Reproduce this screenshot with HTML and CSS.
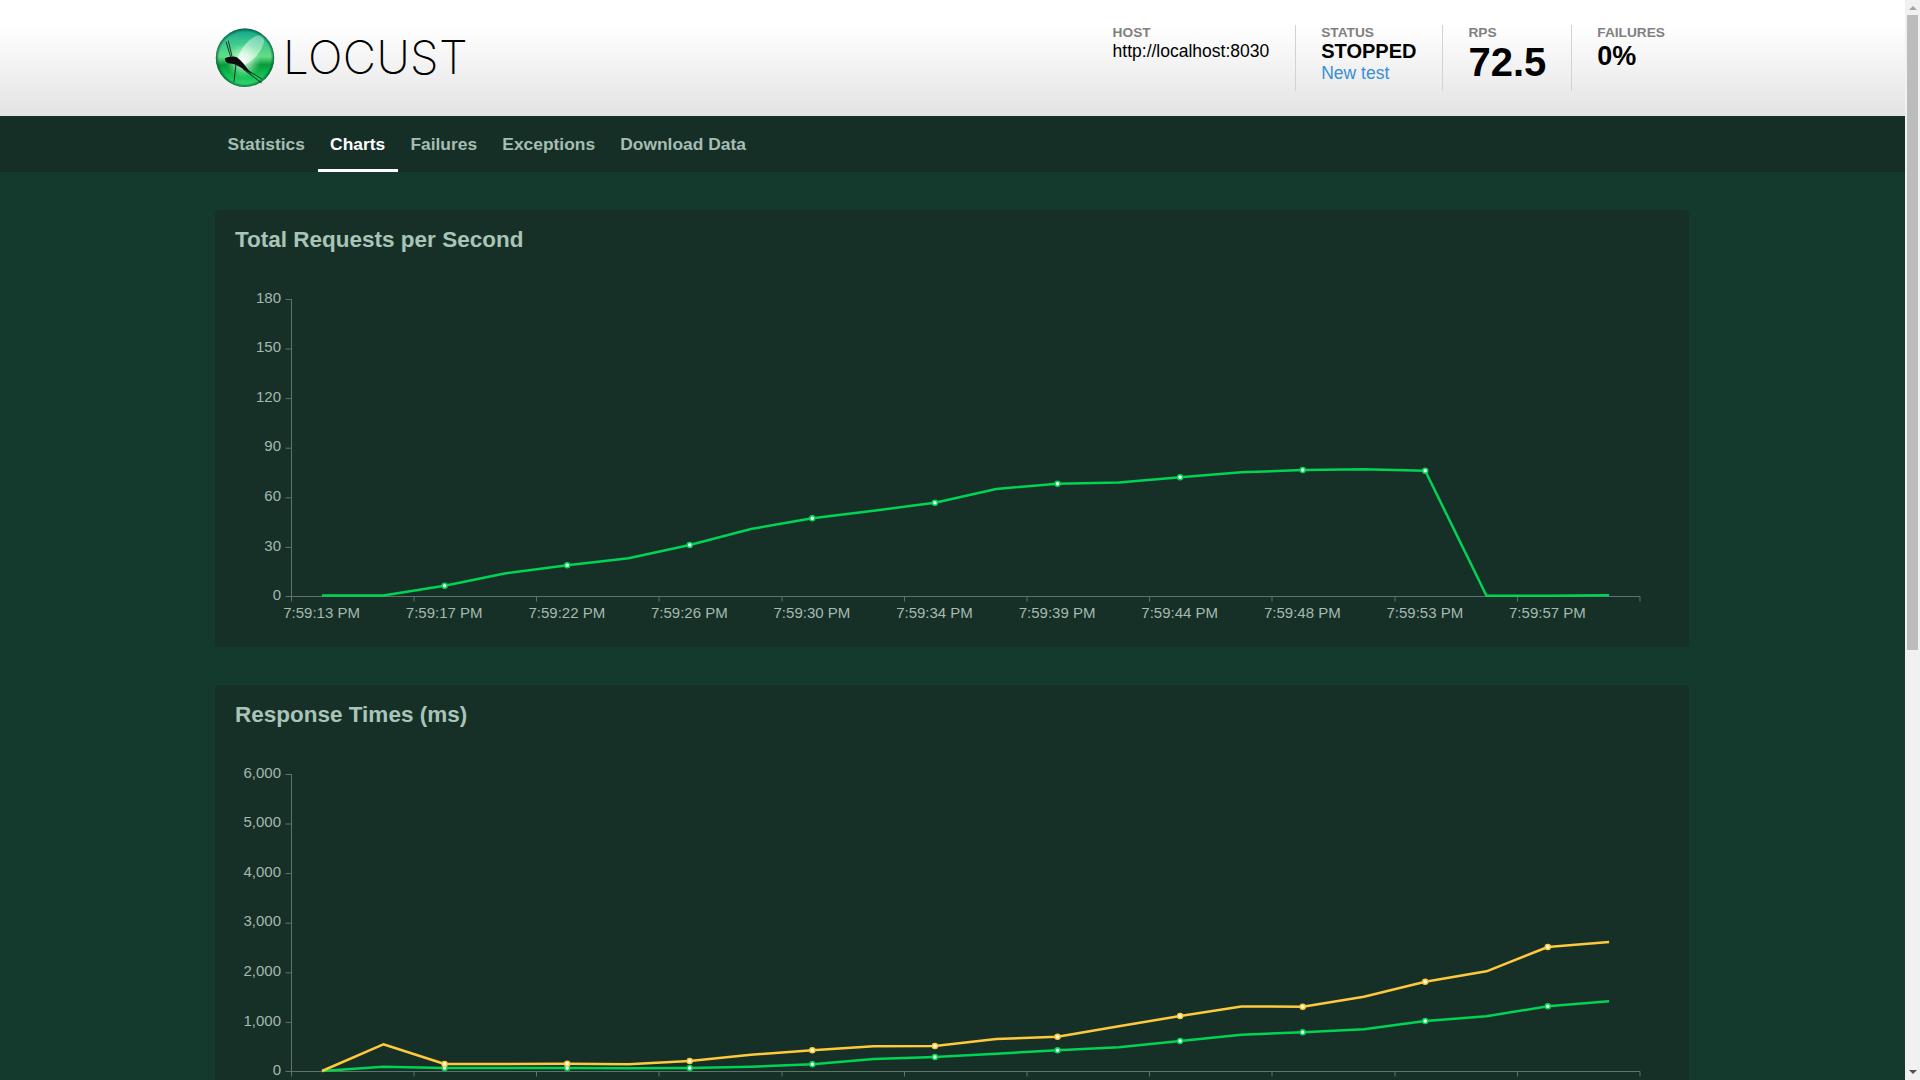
FILE: index.html
```html
<!DOCTYPE html>
<html lang="en">
<head>
<meta charset="utf-8">
<title>Locust</title>
<link rel="stylesheet" href="styles.css">
</head>
<body>
<div class="page">
  <header class="header">
    <div class="brand">
      <svg class="logo" viewBox="0 0 60 60" width="60" height="60" aria-hidden="true">
        <defs>
          <linearGradient id="ball" x1="0" y1="0" x2="0" y2="1">
            <stop offset="0" stop-color="#0f9c8c"/>
            <stop offset="0.2" stop-color="#35c48e"/>
            <stop offset="0.48" stop-color="#62dd86"/>
            <stop offset="0.62" stop-color="#08993a"/>
            <stop offset="0.8" stop-color="#12c052"/>
            <stop offset="1" stop-color="#3ada76"/>
          </linearGradient>
          <radialGradient id="glow" cx="0.47" cy="0.55" r="0.3">
            <stop offset="0" stop-color="#ffffff" stop-opacity="0.95"/>
            <stop offset="0.45" stop-color="#e6ffe9" stop-opacity="0.55"/>
            <stop offset="1" stop-color="#a0ffc0" stop-opacity="0"/>
          </radialGradient>
          <radialGradient id="rim" cx="0.5" cy="0.5" r="0.5">
            <stop offset="0.88" stop-color="#006b3a" stop-opacity="0"/>
            <stop offset="1" stop-color="#004a38" stop-opacity="0.8"/>
          </radialGradient>
          <linearGradient id="wing" x1="0" y1="0" x2="0" y2="1">
            <stop offset="0" stop-color="#fff" stop-opacity=".3"/>
            <stop offset="1" stop-color="#fff" stop-opacity=".7"/>
          </linearGradient>
        </defs>
        <circle cx="30" cy="29.8" r="29.2" fill="url(#ball)"/>
        <circle cx="30" cy="29.8" r="29.2" fill="url(#glow)"/>
        <ellipse cx="36" cy="22" rx="8" ry="18" transform="rotate(40 36 22)" fill="url(#wing)"/>
        <circle cx="30" cy="29.8" r="29.2" fill="url(#rim)"/>
        <path d="M10 30.500C12 28.500 15 29 18 28.500C22 28 25 32 28 35L37 46.500L25 39C21 36.500 18 35.500 15 35.500C12 35.500 10 33.500 10 30.500Z" fill="#0c0c0c"/>
        <g stroke="#0c0c0c" fill="none" stroke-width=".8">
          <path d="M11 13.700L15.700 29M13.300 12.700L17 28.500"/>
          <path d="M21 36L19 53.700"/>
          <path d="M28 41L46.700 55M32 42L47 51"/>
        </g>
      </svg>
      <span class="wordmark">LOCUST</span>
    </div>
    <div class="stats">
      <div class="stat stat-host-box">
        <div class="stat-label">HOST</div>
        <div class="stat-host">http://localhost:8030</div>
      </div>
      <div class="stat stat-line stat-status-box">
        <div class="stat-label">STATUS</div>
        <div class="stat-status">STOPPED</div>
        <a class="stat-link" href="#">New test</a>
      </div>
      <div class="stat stat-line stat-rps-box">
        <div class="stat-label">RPS</div>
        <div class="stat-rps">72.5</div>
      </div>
      <div class="stat stat-line stat-last">
        <div class="stat-label">FAILURES</div>
        <div class="stat-fail">0%</div>
      </div>
    </div>
  </header>
  <nav class="nav">
    <a class="tab" href="#">Statistics</a>
    <a class="tab tab-active" href="#">Charts</a>
    <a class="tab" href="#">Failures</a>
    <a class="tab" href="#">Exceptions</a>
    <a class="tab" href="#">Download Data</a>
  </nav>
  <main class="main">
    <section class="card">
      <h2 class="card-title">Total Requests per Second</h2>
      <svg class="chart" width="1474" height="377" viewBox="0 0 1474 377">
        <g class="axis">
          <path d="M76.500 29V326.500H1425M70.500 29.500H76.500M70.500 79H76.500M70.500 128.600H76.500M70.500 178.200H76.500M70.500 227.800H76.500M70.500 277.400H76.500M70.500 326.500H76.500"/>
          <path d="M76.500 326.500v5M199 326.500v5M321.500 326.500v5M444 326.500v5M567 326.500v5M689.500 326.500v5M812 326.500v5M934.500 326.500v5M1057 326.500v5M1180 326.500v5M1302.500 326.500v5M1425 326.500v5"/>
        </g>
        <g class="ylabels">
          <text x="66" y="32.700">180</text><text x="66" y="82">150</text><text x="66" y="131.800">120</text><text x="66" y="181.300">90</text><text x="66" y="231">60</text><text x="66" y="280.600">30</text><text x="66" y="330.200">0</text>
        </g>
        <g class="xlabels">
          <text x="106.600" y="348">7:59:13 PM</text><text x="229.200" y="348">7:59:17 PM</text><text x="351.800" y="348">7:59:22 PM</text><text x="474.300" y="348">7:59:26 PM</text><text x="596.900" y="348">7:59:30 PM</text><text x="719.500" y="348">7:59:34 PM</text><text x="842.100" y="348">7:59:39 PM</text><text x="964.700" y="348">7:59:44 PM</text><text x="1087.300" y="348">7:59:48 PM</text><text x="1209.800" y="348">7:59:53 PM</text><text x="1332.400" y="348">7:59:57 PM</text>
        </g>
        <polyline class="line line-green" points="107,325.500 168.300,325.500 229.600,315.700 290.900,303.300 352.200,295.300 413.500,288.300 474.700,275 536,259 597.300,248.300 658.600,240.700 719.900,232.700 781.200,219 842.500,213.700 903.800,212.500 965.100,207.300 1026.400,202.300 1087.700,200 1148.900,199.300 1210.200,200.700 1271.500,325.700 1332.800,325.700 1394.100,325.200"/>
        <g class="dots dots-green">
          <circle cx="229.600" cy="315.700" r="2.500"/><circle cx="352.200" cy="295.300" r="2.500"/><circle cx="474.700" cy="275" r="2.500"/><circle cx="597.300" cy="248.300" r="2.500"/><circle cx="719.900" cy="232.700" r="2.500"/><circle cx="842.500" cy="213.700" r="2.500"/><circle cx="965.100" cy="207.300" r="2.500"/><circle cx="1087.700" cy="200" r="2.500"/><circle cx="1210.200" cy="200.700" r="2.500"/>
        </g>
      </svg>
    </section>
    <section class="card">
      <h2 class="card-title">Response Times (ms)</h2>
      <svg class="chart" width="1474" height="377" viewBox="0 0 1474 377">
        <g class="axis">
          <path d="M76.500 29V326.500H1425M70.500 29.500H76.500M70.500 79H76.500M70.500 128.600H76.500M70.500 178.200H76.500M70.500 227.800H76.500M70.500 277.400H76.500M70.500 326.500H76.500"/>
          <path d="M76.500 326.500v5M199 326.500v5M321.500 326.500v5M444 326.500v5M567 326.500v5M689.500 326.500v5M812 326.500v5M934.500 326.500v5M1057 326.500v5M1180 326.500v5M1302.500 326.500v5M1425 326.500v5"/>
        </g>
        <g class="ylabels">
          <text x="66" y="32.700">6,000</text><text x="66" y="82">5,000</text><text x="66" y="131.800">4,000</text><text x="66" y="181.300">3,000</text><text x="66" y="231">2,000</text><text x="66" y="280.600">1,000</text><text x="66" y="330.200">0</text>
        </g>
        <polyline class="line line-green" points="107,326 168.300,321.700 229.600,323 290.900,323 352.200,323 413.500,323.300 474.700,323 536,321.700 597.300,319.300 658.600,314 719.900,312 781.200,308.700 842.500,305.300 903.800,302.300 965.100,296 1026.400,289.700 1087.700,287.300 1148.900,284.300 1210.200,276 1271.500,271.300 1332.800,261.300 1394.100,256.300"/>
        <polyline class="line line-yellow" points="107,326 168.300,299.300 229.600,319 290.900,319 352.200,318.700 413.500,319.300 474.700,316 536,309.700 597.300,305.300 658.600,301.300 719.900,301 781.200,294 842.500,291.700 903.800,281.300 965.100,271 1026.400,261.500 1087.700,261.700 1148.900,251.700 1210.200,236.700 1271.500,226.300 1332.800,202 1394.100,197"/>
        <g class="dots dots-green">
          <circle cx="229.600" cy="323" r="2.500"/><circle cx="352.200" cy="323" r="2.500"/><circle cx="474.700" cy="323" r="2.500"/><circle cx="597.300" cy="319.300" r="2.500"/><circle cx="719.900" cy="312" r="2.500"/><circle cx="842.500" cy="305.300" r="2.500"/><circle cx="965.100" cy="296" r="2.500"/><circle cx="1087.700" cy="287.300" r="2.500"/><circle cx="1210.200" cy="276" r="2.500"/><circle cx="1332.800" cy="261.300" r="2.500"/>
        </g>
        <g class="dots dots-yellow">
          <circle cx="229.600" cy="319" r="2.500"/><circle cx="352.200" cy="318.700" r="2.500"/><circle cx="474.700" cy="316" r="2.500"/><circle cx="597.300" cy="305.300" r="2.500"/><circle cx="719.900" cy="301" r="2.500"/><circle cx="842.500" cy="291.700" r="2.500"/><circle cx="965.100" cy="271" r="2.500"/><circle cx="1087.700" cy="261.700" r="2.500"/><circle cx="1210.200" cy="236.700" r="2.500"/><circle cx="1332.800" cy="202" r="2.500"/>
        </g>
      </svg>
    </section>
  </main>
</div>
<div class="scrollbar" aria-hidden="true">
  <div class="scroll-arrow scroll-up"></div>
  <div class="scroll-thumb"></div>
  <div class="scroll-spacer"></div>
  <div class="scroll-arrow scroll-down"></div>
</div>
</body>
</html>
```
FILE: styles.css
```css
* { box-sizing: border-box; }
html, body { margin: 0; height: 100%; overflow: hidden; }
body {
  display: flex;
  font-family: "Liberation Sans", Arial, sans-serif;
  background: #14392d;
}
.page { flex: 1; min-width: 0; height: 100vh; overflow: hidden; }

/* header */
.header {
  height: 116px;
  padding: 0 216px 0 215px;
  display: flex;
  justify-content: space-between;
  align-items: center;
  background: linear-gradient(#fff 0%, #fff 22%, #e3e3e3 100%);
}
.brand { display: flex; align-items: center; gap: 8px; }
.logo { display: block; }
.wordmark {
  font-family: Inter, "Liberation Sans", sans-serif;
  font-weight: 200;
  font-size: 45.8px;
  line-height: 46px;
  letter-spacing: 0.4px;
  color: #000;
}
.stats { display: flex; }
.stat { height: 66px; color: #000; }
.stat-host-box { padding: 0 26px 0 26px; }
.stat-status-box { padding: 0 26px 0 25px; }
.stat-rps-box { padding: 0 25px 0 25px; }
.stat-line { border-left: 1px solid #d2d2d2; }
.stat-last { padding: 0 24px 0 25px; }
.stat-label { font-size: 13.7px; line-height: 16px; font-weight: 700; color: #808080; }
.stat-host { font-size: 17.5px; line-height: 20px; }
.stat-status { font-size: 20px; line-height: 21px; font-weight: 700; }
.stat-link { display: block; font-size: 17.5px; line-height: 23px; color: #3a8fd0; text-decoration: none; }
.stat-rps { font-size: 40px; line-height: 42px; font-weight: 700; }
.stat-fail { font-size: 27px; line-height: 31px; font-weight: 700; }

/* tabs */
.nav {
  height: 56px;
  padding: 0 216px 0 215px;
  display: flex;
  background: #152e26;
}
.tab {
  display: flex;
  align-items: center;
  padding: 3px 12.6px 0;
  border-bottom: 3px solid transparent;
  font-size: 17.4px;
  font-weight: 700;
  color: #a5bdb3;
  text-decoration: none;
}
.tab-active { color: #fff; border-bottom-color: #fff; }

/* cards */
.main { padding: 38px 216px 0 215px; }
.card {
  height: 437px;
  margin-bottom: 38px;
  border-radius: 4px;
  background: #163027;
}
.card-title {
  margin: 0;
  padding: 17px 20px 17px;
  font-size: 22.5px;
  line-height: 26px;
  font-weight: 700;
  color: #a9c4b8;
}
.chart { display: block; }
.axis path { fill: none; stroke: #5e736a; stroke-width: 1; }
.ylabels text, .xlabels text {
  font-family: "Liberation Sans", Arial, sans-serif;
  font-size: 15px;
  fill: #a5b9b0;
}
.ylabels text { text-anchor: end; }
.xlabels text { text-anchor: middle; }
.line { fill: none; stroke-width: 2.5; stroke-linejoin: round; }
.line-green { stroke: #00d455; }
.line-yellow { stroke: #ffc93c; }
.dots circle { fill: #fff; stroke-width: 1.5; }
.dots-green circle { stroke: #00d455; }
.dots-yellow circle { stroke: #ffc93c; }

/* scrollbar */
.scrollbar {
  width: 15px;
  height: 100vh;
  flex: none;
  display: flex;
  flex-direction: column;
  align-items: center;
  background: #f1f1f1;
}
.scroll-arrow { width: 15px; height: 15px; flex: none; position: relative; }
.scroll-up::after, .scroll-down::after {
  content: "";
  position: absolute;
  left: 3.5px;
  border-left: 4px solid transparent;
  border-right: 4px solid transparent;
}
.scroll-up::after { top: 5.500px; border-bottom: 4.500px solid #a3a3a3; }
.scroll-down::after { top: 5px; border-top: 4.500px solid #505050; }
.scroll-thumb { width: 11px; height: 635px; flex: none; background: #bcbcbc; }
.scroll-spacer { flex: 1; }
```
